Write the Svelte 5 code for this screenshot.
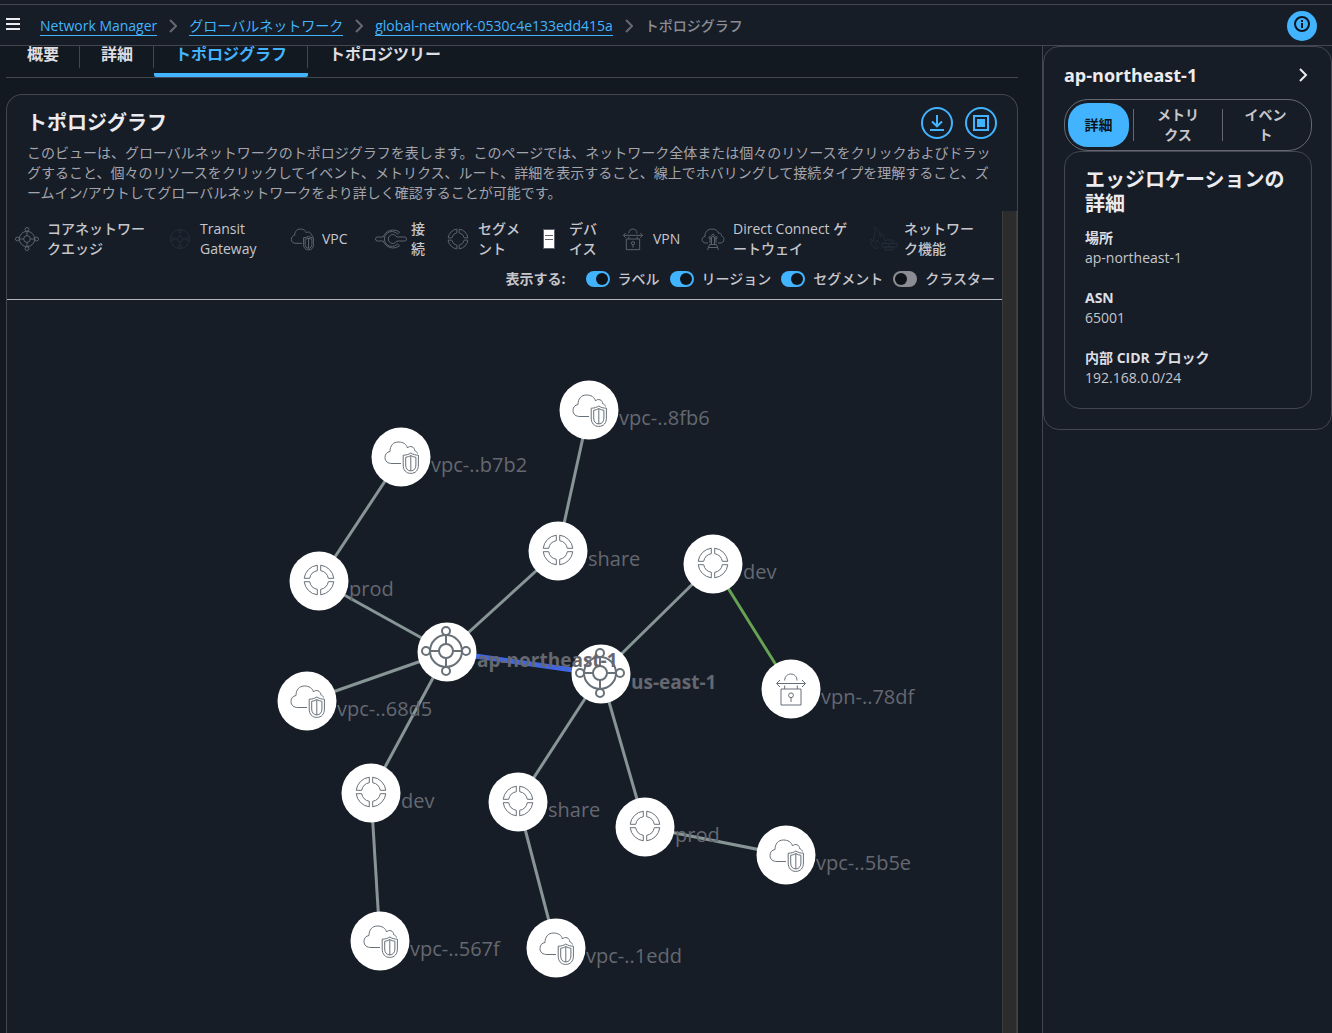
<script lang="ts">
	type IconName = 'edge' | 'segment' | 'vpc' | 'vpn';

	type GraphNode = {
		id: string;
		icon: IconName;
		label: string;
		x: number;
		y: number;
	};

	const RADIUS = 30;

	const crumbs = ['Network Manager', 'グローバルネットワーク', 'global-network-0530c4e133edd415a'];
	const tabs = ['概要', '詳細', 'トポロジグラフ', 'トポロジツリー'];
	let activeTab = $state('トポロジグラフ');

	const legend = [
		{ icon: 'edge', label: 'コアネットワー\nクエッジ' },
		{ icon: 'transit', label: 'Transit\nGateway' },
		{ icon: 'vpc', label: 'VPC' },
		{ icon: 'attachment', label: '接\n続' },
		{ icon: 'segment', label: 'セグメ\nント' },
		{ icon: 'device', label: 'デバ\nイス' },
		{ icon: 'vpn', label: 'VPN' },
		{ icon: 'direct', label: 'Direct Connect ゲ\nートウェイ' },
		{ icon: 'firewall', label: 'ネットワー\nク機能' }
	];

	let toggles = $state([
		{ id: 'labels', label: 'ラベル', on: true },
		{ id: 'regions', label: 'リージョン', on: true },
		{ id: 'segments', label: 'セグメント', on: true },
		{ id: 'clusters', label: 'クラスター', on: false }
	]);

	const nodes: GraphNode[] = [
		{ id: 'vpc-8fb6', icon: 'vpc', label: 'vpc-..8fb6', x: 582, y: 110 },
		{ id: 'vpc-b7b2', icon: 'vpc', label: 'vpc-..b7b2', x: 394, y: 157 },
		{ id: 'ap-share', icon: 'segment', label: 'share', x: 551, y: 251 },
		{ id: 'ap-prod', icon: 'segment', label: 'prod', x: 312, y: 281 },
		{ id: 'us-dev', icon: 'segment', label: 'dev', x: 706, y: 264 },
		{ id: 'ap', icon: 'edge', label: 'ap-northeast-1', x: 440, y: 352 },
		{ id: 'us', icon: 'edge', label: 'us-east-1', x: 594, y: 374 },
		{ id: 'vpn-78df', icon: 'vpn', label: 'vpn-..78df', x: 784, y: 389 },
		{ id: 'vpc-68d5', icon: 'vpc', label: 'vpc-..68d5', x: 300, y: 401 },
		{ id: 'ap-dev', icon: 'segment', label: 'dev', x: 364, y: 493 },
		{ id: 'us-share', icon: 'segment', label: 'share', x: 511, y: 502 },
		{ id: 'us-prod', icon: 'segment', label: 'prod', x: 638, y: 527 },
		{ id: 'vpc-5b5e', icon: 'vpc', label: 'vpc-..5b5e', x: 779, y: 555 },
		{ id: 'vpc-567f', icon: 'vpc', label: 'vpc-..567f', x: 373, y: 641 },
		{ id: 'vpc-1edd', icon: 'vpc', label: 'vpc-..1edd', x: 549, y: 648 }
	];

	const links = [
		['ap-share', 'vpc-8fb6'],
		['ap-prod', 'vpc-b7b2'],
		['ap', 'ap-share'],
		['ap', 'ap-prod'],
		['ap', 'vpc-68d5'],
		['ap', 'ap-dev'],
		['ap-dev', 'vpc-567f'],
		['us', 'us-dev'],
		['us', 'us-share'],
		['us', 'us-prod'],
		['us-share', 'vpc-1edd'],
		['us-prod', 'vpc-5b5e'],
		['us-dev', 'vpn-78df', 'vpn'],
		['ap', 'us', 'peering']
	];

	const byId = Object.fromEntries(nodes.map((n) => [n.id, n]));
	const iconSize = (icon: IconName) => (icon === 'edge' ? 50 : 36);

	const panelTabs = ['詳細', 'メトリクス', 'イベント'];
	let activePanelTab = $state('詳細');

	const details = [
		['場所', 'ap-northeast-1'],
		['ASN', '65001'],
		['内部 CIDR ブロック', '192.168.0.0/24']
	];
</script>

<svg class="sprite" aria-hidden="true">
	<symbol id="edge" viewBox="-25 -25 50 50">
		<circle r="16" />
		<circle r="7" />
		<path d="M-16 0H-7M7 0H16M0-16V-7M0 7V16" />
		<circle cx="-20" r="4" />
		<circle cx="20" r="4" />
		<circle cy="-20" r="4" />
		<circle cy="20" r="4" />
	</symbol>
	<symbol id="segment" viewBox="-18 -18 36 36">
		<path d="M-1.7-14.8A15 15 0 0 0-14.8-1.7H-9.3A9.5 9.5 0 0 1-1.7-9.3Z" />
		<path d="M1.7-14.8A15 15 0 0 1 14.8-1.7H9.3A9.5 9.5 0 0 0 1.7-9.3Z" />
		<path d="M-1.7 14.8A15 15 0 0 1-14.8 1.7H-9.3A9.5 9.5 0 0 0-1.7 9.3Z" />
		<path d="M1.7 14.8A15 15 0 0 0 14.8 1.7H9.3A9.5 9.5 0 0 1 1.7 9.3Z" />
	</symbol>
	<symbol id="vpc" viewBox="-18 -18 36 36">
		<path d="M0 6.5H-9C-13 6.5-16 4.5-16 .5C-16-3-14-5-11-5.5C-11-11-8-15-2.5-15C2-15 5.5-13 6.5-9C7.5-10.5 9.5-10.8 11-10.2C13-9.5 13.5-8 13.7-6.3C15-6 16-5 16.5-3.5" />
		<path d="M9.8-4C7.8-2.6 5-1.8 2.2-1.8V8C2.2 13 5 16.4 9.8 16.4C14.6 16.4 17.4 13 17.4 8V-1.8C14.6-1.8 11.8-2.6 9.8-4Z" />
		<path d="M9.8-1.4C8.2-.5 6.4.1 4.7.3V8C4.7 11.6 6.7 13.9 9.8 13.9C12.9 13.9 14.9 11.6 14.9 8V.3C13.2.1 11.4-.5 9.8-1.4ZM9.8-1.4V13.9" />
	</symbol>
	<symbol id="vpn" viewBox="-18 -18 36 36">
		<path d="M-10 0H10V16H-10ZM-6.3-8.5C-6.3-12.5-3.6-15-.2-15C3.4-15 6-12.5 6-8.5M-6.3-3.5V0M6.3-3.5V0" />
		<path d="M-14-5.5H14M-11-9L-14.5-5.5L-11-2M11-9L14.5-5.5L11-2" />
		<circle cy="6.3" r="2.4" />
		<path d="M0 8.7V13" />
	</symbol>
	<symbol id="transit" viewBox="-12 -12 24 24">
		<circle r="9.5" />
		<circle r="2.6" />
		<path d="M-6-0H-2.6M2.6 0H6M0-6V-2.6M0 2.6V6" />
		<circle cx="-7.7" r="1.5" />
		<circle cx="7.7" r="1.5" />
		<circle cy="-7.7" r="1.5" />
		<circle cy="7.7" r="1.5" />
	</symbol>
	<symbol id="attachment" viewBox="-16 -12 32 24">
		<path d="M8.5-6.800A10.500 10.500 0 0 0-7.800-2H-13.500Q-15.500-2-15.500 0T-13.500 2H-7.800A10.500 10.500 0 0 0 8.500 6.800L6.500 5A7.500 7.500 0 1 1 6.500-5Z" />
		<path d="M5.800-2H13.500Q15.500-2 15.500 0T13.500 2H5.800A4.500 4.500 0 1 1 5.800-2Z" />
	</symbol>
	<symbol id="direct" viewBox="-12 -12 24 24">
		<path d="M-5 4H-7C-12 4-12-2-8-2.500C-8.500-7-5-10-1-10C3-10 5-8 5.500-5.500C7-7 8.500-5 8.500-3C12-2 12 4 7 4H5" />
		<path d="M-3.500 5.500H3.500L5.500 11M-3.500 5.500L-5.500 11M-4.500 8.500H4.500M-1.500 5.500V-2M1.500 5.500V-2M-3 4V0M3 4V0" />
		<circle cy="-3.5" r="1.3" />
		<circle cx="-3" cy="-1.3" r="1.1" />
		<circle cx="3" cy="-1.3" r="1.1" />
	</symbol>
	<symbol id="firewall" viewBox="-14 -12 28 24">
		<path d="M-6 10C-12 9-14 5-13 0C-12 2-11 2-11 3C-11-2-8-5-9-12C-5-9-4-5-4-2C-3-3-3-4-3-6C0-3 1-1 0 1M-6 9C-9 7-9 4-7 1C-6 3-5 4-4 5" />
		<path d="M1 1H9V4.500H1ZM-2 4.500H13V8H-2ZM1 8H9V11H1ZM5 4.500V8" />
	</symbol>
</svg>

<div class="app" lang="ja">
	<header>
		<button class="menu" aria-label="メニュー">
			<svg width="14" height="12" viewBox="0 0 14 12"><path d="M0 1H14M0 6H14M0 11H14" /></svg>
		</button>
		<nav aria-label="パンくずリスト">
			<ol>
				{#each crumbs as crumb}
					<li>
						<a href="#top">{crumb}</a>
						<svg width="8" height="14" viewBox="0 0 8 14"><path d="M1 1L7 7L1 13" /></svg>
					</li>
				{/each}
				<li class="current" aria-current="page">トポロジグラフ</li>
			</ol>
		</nav>
		<button class="info" aria-label="情報">
			<svg width="18" height="18" viewBox="0 0 18 18">
				<circle cx="9" cy="9" r="7" />
				<path d="M9 8V13M9 5V7" />
			</svg>
		</button>
	</header>

	<div class="body">
		<main>
			<div class="tabs" role="tablist">
				{#each tabs as tab}
					<button
						role="tab"
						class:active={tab === activeTab}
						aria-selected={tab === activeTab}
						onclick={() => (activeTab = tab)}><span>{tab}</span></button
					>
				{/each}
			</div>

			<section class="card">
				<div class="card-header">
					<div class="title-row">
						<h1>トポロジグラフ</h1>
						<div class="actions">
							<button aria-label="ダウンロード">
								<svg width="16" height="16" viewBox="0 0 16 16"><path d="M8 0V11M3 6.500L8 11.300L13 6.500M1 15H15" /></svg>
							</button>
							<button aria-label="全画面表示">
								<svg width="16" height="16" viewBox="0 0 16 16">
									<rect x="1" y="1" width="14" height="14" />
									<rect class="fill" x="4" y="4" width="8" height="8" />
								</svg>
							</button>
						</div>
					</div>
					<p>
						このビューは、グローバルネットワークのトポロジグラフを表します。このページでは、ネットワーク全体または個々のリソースをクリックおよびドラッグすること、個々のリソースをクリックしてイベント、メトリクス、ルート、詳細を表示すること、線上でホバリングして接続タイプを理解すること、ズームイン/アウトしてグローバルネットワークをより詳しく確認することが可能です。
					</p>
				</div>

				<div class="viewport">
					<div class="pane">
						<ul class="legend">
							{#each legend as item}
								<li>
									<span class="legend-icon {item.icon}">
										{#if item.icon === 'device'}
											<svg width="12" height="20" viewBox="0 0 12 20">
												<rect x="0.500" y="0.500" width="11" height="19" fill="#fff" />
												<path d="M2 6.500H10M2 10.500H10" />
											</svg>
										{:else}
											<svg width={item.icon === 'attachment' ? 32 : item.icon === 'firewall' ? 28 : 24} height="24">
												<use href="#{item.icon}" />
											</svg>
										{/if}
									</span>
									<span class="legend-label">{item.label}</span>
								</li>
							{/each}
						</ul>

						<div class="toggles">
							<strong>表示する:</strong>
							{#each toggles as toggle (toggle.id)}
								<label for={toggle.id}>
									<input type="checkbox" role="switch" id={toggle.id} bind:checked={toggle.on} />
									{toggle.label}
								</label>
							{/each}
						</div>

						<svg class="graph" role="img" aria-label="トポロジグラフ">
							{#each links as [from, to, kind]}
								<line
									class="link {kind ?? ''}"
									x1={byId[from].x}
									y1={byId[from].y}
									x2={byId[to].x}
									y2={byId[to].y}
								/>
							{/each}
							{#each nodes as node (node.id)}
								{@const size = iconSize(node.icon)}
								<g class="node {node.icon}" transform="translate({node.x} {node.y})">
									<circle class="disc" r={RADIUS - 0.5} />
									<use
										href="#{node.icon}"
										x={(node.icon === 'edge' ? -1 : 0) - size / 2}
										y={(node.icon === 'vpc' || node.icon === 'vpn' ? 0 : -1) - size / 2}
										width={size}
										height={size}
									/>
								</g>
							{/each}
							{#if toggles[0].on}
								{#each nodes as node (node.id)}
									<text class:region={node.icon === 'edge'} x={node.x + RADIUS} y={node.y + 15}>{node.label}</text>
								{/each}
							{/if}
						</svg>
					</div>
					<div class="scrollbar"></div>
				</div>
			</section>
		</main>

		<aside>
			<section class="panel">
				<div class="panel-title">
					<h2>ap-northeast-1</h2>
					<button aria-label="パネルを閉じる">
						<svg width="10" height="14" viewBox="0 0 10 14"><path d="M2 1L8 7L2 13" /></svg>
					</button>
				</div>
				<div class="segmented">
					{#each panelTabs as tab}
						<div class="segment">
							<button
								class:selected={tab === activePanelTab}
								aria-pressed={tab === activePanelTab}
								onclick={() => (activePanelTab = tab)}>{tab}</button
							>
						</div>
					{/each}
				</div>
				<div class="details">
					<h3>エッジロケーションの詳細</h3>
					<dl>
						{#each details as [term, value]}
							<div>
								<dt>{term}</dt>
								<dd>{value}</dd>
							</div>
						{/each}
					</dl>
				</div>
			</section>
		</aside>
	</div>
</div>

<style>
	:global(body) {
		background: #131920;
	}

	.app {
		display: flex;
		flex-direction: column;
		box-sizing: border-box;
		height: 100vh;
		overflow: hidden;
		padding-top: 4px;
		background: #161d26;
		color: #c6c6cd;
		font-family: 'Open Sans', 'Noto Sans CJK JP', sans-serif;
		font-size: 14px;
		line-height: 20px;
	}

	h1,
	h2,
	h3,
	p,
	ul,
	ol,
	dl,
	dd {
		margin: 0;
		padding: 0;
	}

	ul,
	ol {
		list-style: none;
	}

	button {
		padding: 0;
		border: 0;
		background: none;
		color: inherit;
		font: inherit;
		cursor: pointer;
	}

	svg {
		display: block;
		fill: none;
		stroke: currentColor;
	}

	.sprite {
		position: absolute;
		width: 0;
		height: 0;
	}

	symbol * {
		vector-effect: non-scaling-stroke;
	}

	header {
		display: flex;
		align-items: center;
		flex: none;
		height: 40px;
		padding: 0 15px 0 6px;
		border-top: 1px solid #424650;
		border-bottom: 1px solid #424650;
	}

	.menu {
		color: #ebebf0;
		margin: 0 20px 2px 0;
	}

	.menu svg {
		stroke-width: 2;
	}

	nav {
		flex: 1;
		padding-top: 2px;
	}

	ol,
	li {
		display: flex;
		align-items: center;
	}

	ol svg {
		margin: 0 12px;
		color: #656871;
		stroke-width: 2;
	}

	ol a {
		border-bottom: 1px solid #42b4ff;
		color: #42b4ff;
		line-height: 18px;
		text-decoration: none;
	}

	.current {
		color: #8c8c94;
		font-weight: 500;
	}

	.info {
		display: grid;
		place-items: center;
		box-sizing: border-box;
		width: 30px;
		height: 30px;
		padding-bottom: 4px;
		margin-top: 2px;
		border-radius: 50%;
		background: #42b4ff;
		color: #0f141a;
	}

	.info svg {
		stroke-width: 2;
	}

	.body {
		display: flex;
		flex: 1;
		min-height: 0;
	}

	main {
		display: flex;
		flex: 1;
		flex-direction: column;
		min-width: 0;
		padding: 0 24px 0 6px;
		background: #131920;
	}

	.tabs {
		display: flex;
		flex: none;
		height: 31px;
		border-bottom: 1px solid #424650;
	}

	.tabs button {
		display: flex;
		align-items: flex-start;
		border-bottom: 4px solid transparent;
		color: #dedee3;
		font-size: 16px;
		font-weight: 700;
		line-height: 16px;
	}

	.tabs span {
		height: 22px;
		padding: 0 20px 0 21px;
		border-right: 1px solid #424650;
	}

	.tabs button:last-child span {
		border-right: 0;
	}

	.tabs .active {
		border-color: #42b4ff;
		border-radius: 2px;
		color: #42b4ff;
	}

	.card {
		display: flex;
		flex: 1;
		flex-direction: column;
		min-height: 0;
		margin-top: 16px;
		border: 1px solid #424650;
		border-bottom: 0;
		border-radius: 16px 16px 0 0;
		background: #161d26;
	}

	.card-header {
		padding: 12px 20px 8px;
	}

	.title-row {
		display: flex;
		justify-content: space-between;
		height: 36px;
	}

	h1 {
		color: #ebebf0;
		font-size: 20px;
		line-height: 32px;
	}

	.actions {
		display: flex;
		gap: 12px;
	}

	.actions button {
		display: grid;
		place-items: center;
		box-sizing: border-box;
		width: 32px;
		height: 32px;
		border: 2px solid #42b4ff;
		border-radius: 50%;
		color: #42b4ff;
	}

	.actions svg {
		stroke-width: 2;
	}

	.actions .fill {
		fill: currentColor;
		stroke: none;
	}

	.card-header p {
		color: #a4a4ad;
	}

	.viewport {
		display: flex;
		flex: 1;
		min-height: 0;
	}

	.pane {
		display: flex;
		flex: 1;
		flex-direction: column;
		min-width: 0;
	}

	.scrollbar {
		box-sizing: border-box;
		width: 15px;
		border-left: 1px solid #3d3d3d;
		border-right: 1px solid #3d3d3d;
		background: #2c2c2c;
	}

	.legend {
		display: grid;
		grid-template-columns: 153fr 122fr 89fr 67fr 91fr 84fr 80fr 171fr 138fr;
		align-items: center;
		height: 40px;
		padding-top: 8px;
		font-weight: 500;
	}

	.legend li {
		min-width: 0;
	}

	.legend-icon {
		display: flex;
		justify-content: center;
		flex: none;
		width: 40px;
		color: #5c636c;
	}

	.legend-icon.transit,
	.legend-icon.firewall {
		color: #232c3a;
	}

	.legend-label {
		white-space: pre;
	}

	.toggles {
		display: flex;
		gap: 10px;
		justify-content: flex-end;
		padding: 10px 7px;
		border-bottom: 1px solid #b4b4bb;
		font-weight: 500;
	}

	.toggles strong {
		margin-right: 10px;
	}

	.toggles label {
		display: flex;
		align-items: center;
		gap: 8px;
	}

	.toggles input {
		display: flex;
		align-items: center;
		appearance: none;
		box-sizing: border-box;
		width: 24px;
		height: 16px;
		margin: 0;
		padding: 0 2px;
		border-radius: 8px;
		background: #8c8c94;
	}

	.toggles input::before {
		content: '';
		width: 12px;
		height: 12px;
		border-radius: 50%;
		background: #0f141a;
	}

	.toggles input:checked {
		justify-content: flex-end;
		background: #42b4ff;
	}

	.graph {
		flex: 1;
		width: 100%;
		min-height: 0;
	}

	.link {
		stroke: #879596;
		stroke-width: 3;
	}

	.link.vpn {
		stroke: #67a353;
	}

	.link.peering {
		stroke: #4266e0;
		stroke-width: 5;
	}

	.node {
		color: #687078;
	}

	.node.edge {
		stroke-width: 2;
	}

	.disc {
		fill: #fff;
		stroke: none;
	}

	text {
		fill: #656871;
		stroke: none;
		font-size: 20px;
	}

	text.region {
		font-size: 19px;
		font-weight: 700;
	}

	aside {
		flex: none;
		width: 289px;
		border-left: 1px solid #424650;
	}

	.panel {
		padding: 16px 19px 20px 20px;
		border: 1px solid #424650;
		border-radius: 16px;
	}

	.panel-title {
		display: flex;
		align-items: center;
		justify-content: space-between;
		height: 24px;
		margin-bottom: 12px;
		color: #ebebf0;
	}

	.panel-title svg {
		margin-right: 4px;
		stroke-width: 2;
	}

	h2 {
		font-size: 18px;
	}

	.segmented {
		display: grid;
		grid-template-columns: 65fr 89fr 86fr;
		align-items: center;
		padding: 3px;
		border: 1px solid #656871;
		border-radius: 24px;
	}

	.segment {
		display: flex;
		align-items: center;
		height: 32px;
	}

	.segment + .segment {
		border-left: 1px solid #656871;
	}

	.segmented button {
		flex: 1;
		padding: 0 20px;
		font-weight: 700;
	}

	.segmented .selected {
		height: 44px;
		margin-right: 4px;
		padding: 0 8px;
		border-radius: 20px;
		background: #42b4ff;
		color: #0f141a;
	}

	.segmented {
		min-height: 44px;
	}

	.details {
		padding: 16px 20px 20px;
		border: 1px solid #424650;
		border-radius: 16px;
	}

	h3 {
		margin-bottom: 12px;
		color: #ebebf0;
		font-size: 20px;
		line-height: 24px;
	}

	dl {
		display: grid;
		gap: 20px;
	}

	dt {
		color: #dedee3;
		font-weight: 700;
	}
</style>
